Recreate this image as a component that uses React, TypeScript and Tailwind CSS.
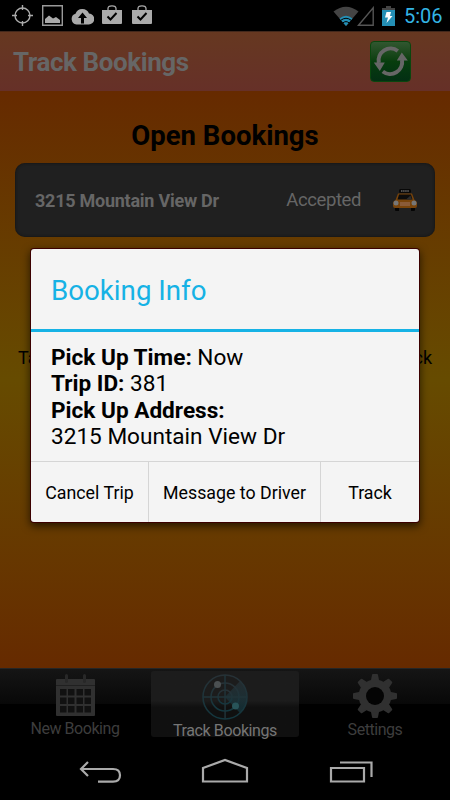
import type { ReactNode } from 'react'

const BOOKING = {
  address: '3215 Mountain View Dr',
  status: 'Accepted',
  time: 'Now',
  tripId: 381,
}

function ShopCheck() {
  return (
    <svg width="20" height="20" viewBox="0 0 20 20">
      <path d="M6 6V3.500Q6 .8 10 .8T14 3.500V6" fill="none" stroke="#aaa" strokeWidth="1.3" />
      <path d="M0 5h20v13q0 1-1 1H1q-1 0-1-1z" fill="#aaa" />
      <path d="M5.500 11.500l3 3 6-6.500" fill="none" stroke="#000" strokeWidth="2" />
    </svg>
  )
}

function StatusBar() {
  return (
    <header className="flex h-[31px] items-center justify-between bg-black pl-3 pr-2">
      <div className="flex items-center gap-[10px]">
        <svg width="21" height="21" viewBox="0 0 21 21" fill="none" stroke="#aaa" strokeWidth="1.4">
          <circle cx="10.500" cy="10.500" r="7.500" />
          <path d="M10.500 0v5M10.500 16v5M0 10.500h5M16 10.500h5" />
        </svg>
        <svg width="21" height="21" viewBox="0 0 21 21" className="-ml-px">
          <path d="M.7.700h19.600v19.600H.7z" fill="none" stroke="#999" strokeWidth="1.4" />
          <path d="M3 18v-4l4-3.500 4 3 3-1.500 4 3v3z" fill="#aaa" />
        </svg>
        <svg width="23" height="18" viewBox="0 0 23 18" className="-ml-[2px]">
          <path
            d="M5.500 17.500A5.500 5.500 0 0 1 4.500 6.800 7.200 7.200 0 0 1 18 6.500a5.500 5.500 0 0 1-.5 11z"
            fill="#aaa"
          />
          <path d="M11.500 5.500L16 11h-3v5.500h-3V11H7z" fill="#000" />
        </svg>
        <div className="-ml-[2px] -mt-[2px] flex gap-[10px]">
          <ShopCheck />
          <ShopCheck />
        </div>
      </div>
      <div className="flex items-center">
        <svg width="26" height="20" viewBox="0 0 26 20">
          <path d="M.5 5.500Q13-4 25.500 5.500L13 20z" fill="#444" />
          <path d="M6.500 12.500Q13 7 19.500 12.500L13 20z" fill="#248fb5" />
          <path d="M7.500 14.500Q13 10 18.500 14.500M9.500 17.200Q13 14 16.500 17.200" fill="none" stroke="#000" strokeWidth="1" />
        </svg>
        <svg width="18" height="20" viewBox="0 0 18 20" className="-ml-[2px]">
          <path d="M1.500 19.200L16.200 1.800v17.400z" fill="none" stroke="#555" strokeWidth="1.400" />
        </svg>
        <svg width="13" height="20" viewBox="0 0 13 20" className="ml-[7px]">
          <path d="M4 0h5v2h4v3H0V2h4z" fill="#444" />
          <path d="M0 4h13v16H0z" fill="#248fb5" />
          <path d="M4.500 6H9L8 10h2.500L4.500 17 6 11.500H3z" fill="#fff" />
        </svg>
        <span className="ml-[9px] mt-px w-[38px] whitespace-nowrap text-[20px] leading-none text-[#33b5e5]">5:06</span>
      </div>
    </header>
  )
}

function RefreshButton() {
  return (
    <button
      type="button"
      aria-label="Refresh"
      className="h-[41px] w-[41px] rounded-[4px] border border-[#0a460e] bg-linear-to-b from-[#315730] via-[#073d0d] to-[#032f13]"
    >
      <svg width="39" height="39" viewBox="0.7 0 39 39">
        <g fill="none" stroke="#666" strokeWidth="4">
          <path d="M27.500 9A12 12 0 0 0 8.500 21" />
          <path d="M12.500 29.500A12 12 0 0 0 31.700 18" />
        </g>
        <path d="M3.500 20.500h11l-5 8.500zM26.500 18.500h11L31.500 10.500z" fill="#666" />
      </svg>
    </button>
  )
}

function Taxi() {
  return (
    <svg width="24" height="23" viewBox="0 0 24 23">
      <rect x="6" y="0" width="12" height="4" rx="1.500" fill="#080808" />
      <path d="M8 2h8" stroke="#666" strokeWidth="1.500" strokeDasharray="1.500 .6" />
      <path d="M2 18h4v4H3q-1 0-1-1zM18 18h4v3q0 1-1 1h-3z" fill="#050505" />
      <path d="M5 4.500h14l2.500 6.500Q24 12 24 14v3q0 2-2 2H2q-2 0-2-2v-3q0-2 2.500-3z" fill="#79440b" />
      <path d="M6 5.500h12l1.500 5h-15z" fill="#0c0c0c" />
      <path d="M13 10.500l4.500-4 1.500 4z" fill="#2c2c2c" />
      <rect x="7" y="13" width="10" height="4" fill="#8a5b38" />
      <circle cx="3" cy="14" r="2.500" fill="#777" />
      <circle cx="21" cy="14" r="2.500" fill="#777" />
    </svg>
  )
}

function CalendarIcon() {
  return (
    <svg width="39" height="43" viewBox="0 0 39 43">
      <path d="M0 6q0-1 1-1h37q1 0 1 1v35q0 1-1 1H1q-1 0-1-1z" fill="#303030" />
      <path d="M0 11.500h39" stroke="#202020" />
      {[15, 23.500, 32].map((y) =>
        [4, 12, 20.500, 28.500].map((x) => (
          <rect key={`${x}-${y}`} x={x} y={y} width="6.500" height="6.500" fill="#111" />
        )),
      )}
      <path d="M10.500 1.500v6M28.500 1.500v6" stroke="#282828" strokeWidth="3" strokeLinecap="round" />
    </svg>
  )
}

function RadarIcon() {
  return (
    <svg width="46" height="46" viewBox="0 0 46 46">
      <defs>
        <linearGradient id="ring" x1="0" y1="0" x2="0" y2="1">
          <stop offset="0" stopColor="#273136" />
          <stop offset="1" stopColor="#13373f" />
        </linearGradient>
      </defs>
      <path d="M23 23L38 7A22 22 0 0 1 38 39z" fill="url(#ring)" opacity=".75" />
      <g fill="none" stroke="url(#ring)" strokeWidth="1.500">
        <circle cx="23" cy="23" r="22" />
        <circle cx="23" cy="23" r="14" />
        <circle cx="23" cy="23" r="7" />
        <path d="M1 23.100L45 23M23 1L23.100 45" stroke="#20343a" />
      </g>
      <circle cx="15.500" cy="10.500" r="3.500" fill="#4b5052" />
      <circle cx="33.500" cy="32" r="3.500" fill="#285459" />
    </svg>
  )
}

function GearIcon() {
  return (
    <svg width="44" height="44" viewBox="0 0 44 44">
      <g fill="#303030">
        {[0, 45, 90, 135].map((angle) => (
          <path
            key={angle}
            transform={`rotate(${angle} 22 22)`}
            d="M18 6l1-5q0-1 1-1h4q1 0 1 1l1 5v32l-1 5q0 1-1 1h-4q-1 0-1-1l-1-5z"
          />
        ))}
        <circle cx="22" cy="22" r="16.500" />
      </g>
      <circle cx="22" cy="22" r="9" fill="#040404" />
    </svg>
  )
}

interface TabProps {
  label: string
  icon: ReactNode
  active?: boolean
}

function Tab({ label, icon, active }: TabProps) {
  return (
    <button
      type="button"
      className={
        active
          ? 'mt-[2px] flex h-[66px] w-[148px] flex-col items-center rounded-[3px] bg-linear-to-b from-[#1c1c1c] from-45% to-[#101010] to-55% pt-[3px] text-[#757575]'
          : 'mt-[2px] flex h-[66px] w-[148px] flex-col items-center pt-[3px] text-[#3d3d3d]'
      }
    >
      <span className="flex h-[46px] items-start">{icon}</span>
      <span
        className={
          active
            ? 'mt-px whitespace-nowrap text-[16px] leading-[19px] tracking-[-0.4px]'
            : 'mt-[2px] whitespace-nowrap text-[16px] leading-[19px] tracking-[-0.45px]'
        }
      >
        {label}
      </span>
    </button>
  )
}

function BookingDialog() {
  return (
    <section
      role="dialog"
      aria-label="Booking Info"
      className="absolute left-[31px] top-[249px] flex h-[273px] w-[388px] flex-col rounded-[3px] bg-[#f4f4f4] text-black shadow-[0_0_0_1px_#3b0000,0_3px_8px_1px_rgba(0,0,0,0.65)]"
    >
      <h2 className="flex h-[83px] shrink-0 items-center border-b-[3px] border-[#16b2e5] pl-[20px] pt-[4px] text-[27.700px] text-[#16b2e5]">
        Booking Info
      </h2>
      <div className="flex-1 pl-[20px] pt-[13px] text-[22.600px] leading-[26.300px]">
        <p><b>Pick Up Time:</b> {BOOKING.time}</p>
        <p><b>Trip ID:</b> {BOOKING.tripId}</p>
        <p><b>Pick Up Address:</b></p>
        <p>{BOOKING.address}</p>
      </div>
      <div className="flex h-[61px] shrink-0 border-t border-[#d5d5d5] text-[17.800px]">
        <button type="button" className="w-[118px] border-r border-[#d5d5d5] pt-[2px]">Cancel Trip</button>
        <button type="button" className="w-[172px] border-r border-[#d5d5d5] pt-[2px]">Message to Driver</button>
        <button type="button" className="flex-1 pt-[2px]">Track</button>
      </div>
    </section>
  )
}

export default function App() {
  return (
    <div className="relative flex h-[800px] w-[450px] flex-col overflow-hidden bg-black font-['Roboto',sans-serif]">
      <StatusBar />
      <div className="flex h-[60px] items-center justify-between bg-linear-to-b from-[#663820] to-[#663028] pl-[13px] pr-[39px] shadow-[inset_0_1px_0_#43281b]">
        <h1 className="pt-[2px] text-[26px] font-bold tracking-[-0.43px] text-[#666]">Track Bookings</h1>
        <RefreshButton />
      </div>
      <main className="h-[577px] bg-linear-to-b from-[#662a00] via-[#664b00] to-[#662a00] px-[15px] pt-[29px]">
        <h2 className="text-center text-[27.500px] font-bold leading-[32px] text-black">Open Bookings</h2>
        <div className="mt-[11px] flex h-[74px] items-center rounded-[10px] bg-[#202020] pl-5 pr-[18px] text-[#666] shadow-[inset_0_0_3px_#101010]">
          <span className="text-[18px] font-bold tracking-[-0.25px]">{BOOKING.address}</span>
          <span className="ml-auto mr-[32px] mt-px text-[18.500px] tracking-[-0.4px]">{BOOKING.status}</span>
          <Taxi />
        </div>
        <p className="mt-[110px] flex justify-between px-[3px] text-[18px] leading-[22px] text-black">
          <span>Ta</span>
          <span>ck</span>
        </p>
      </main>
      <nav className="flex h-[72px] justify-center gap-0.5 border-t border-[#252525] bg-linear-to-b from-[#151515] via-[#080808] via-50% to-black to-50%">
        <Tab label="New Booking" icon={<CalendarIcon />} />
        <Tab label="Track Bookings" icon={<RadarIcon />} active />
        <Tab label="Settings" icon={<GearIcon />} />
      </nav>
      <div className="flex h-[60px] items-start justify-center bg-black pt-[16px]">
        <svg width="300" height="34" viewBox="75 756 300 34" fill="none" stroke="#aaa" strokeWidth="2.200">
          <path d="M88 762l-7 7 7 7M81 769h32q7 0 7 6.300t-7 6.300H98" />
          <path d="M203 781.500V768l22-8 22 8v13.500z" />
          <path d="M331 768h33v13.500h-33zM340 762.500h31.500V777" />
        </svg>
      </div>
      <BookingDialog />
    </div>
  )
}
